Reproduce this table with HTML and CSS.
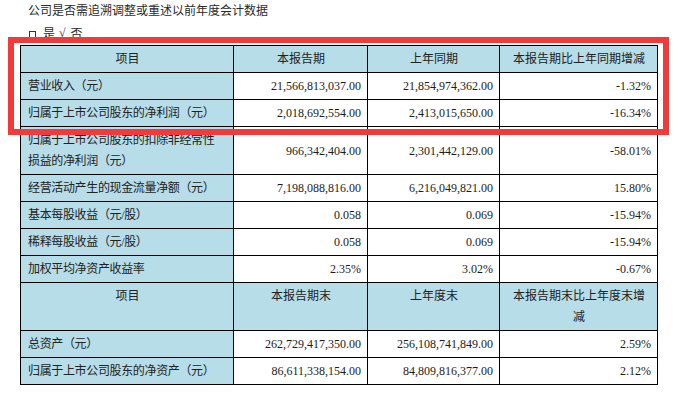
FILE: index.html
```html
<!DOCTYPE html>
<html lang="zh">
<head>
<meta charset="utf-8">
<link rel="stylesheet" href="styles.css">
</head>
<body>
<div class="page">
  <div class="intro">
    <p class="line">公司是否需追溯调整或重述以前年度会计数据</p>
    <p class="line opts"><span class="box"></span><span class="opt">是</span><span class="check">√</span><span class="opt">否</span></p>
  </div>
  <table class="data">
    <colgroup>
      <col class="c1"><col class="c2"><col class="c3"><col class="c4">
    </colgroup>
    <tr class="head">
      <td>项目</td><td>本报告期</td><td>上年同期</td><td>本报告期比上年同期增减</td>
    </tr>
    <tr>
      <td class="label">营业收入（元）</td><td class="num">21,566,813,037.00</td><td class="num">21,854,974,362.00</td><td class="num">-1.32%</td>
    </tr>
    <tr>
      <td class="label">归属于上市公司股东的净利润（元）</td><td class="num">2,018,692,554.00</td><td class="num">2,413,015,650.00</td><td class="num">-16.34%</td>
    </tr>
    <tr>
      <td class="label">归属于上市公司股东的扣除非经常性<br>损益的净利润（元）</td><td class="num">966,342,404.00</td><td class="num">2,301,442,129.00</td><td class="num">-58.01%</td>
    </tr>
    <tr>
      <td class="label">经营活动产生的现金流量净额（元）</td><td class="num">7,198,088,816.00</td><td class="num">6,216,049,821.00</td><td class="num">15.80%</td>
    </tr>
    <tr>
      <td class="label">基本每股收益（元/股）</td><td class="num">0.058</td><td class="num">0.069</td><td class="num">-15.94%</td>
    </tr>
    <tr>
      <td class="label">稀释每股收益（元/股）</td><td class="num">0.058</td><td class="num">0.069</td><td class="num">-15.94%</td>
    </tr>
    <tr>
      <td class="label">加权平均净资产收益率</td><td class="num">2.35%</td><td class="num">3.02%</td><td class="num">-0.67%</td>
    </tr>
    <tr class="head top">
      <td>项目</td><td>本报告期末</td><td>上年度末</td><td>本报告期末比上年度末增<br>减</td>
    </tr>
    <tr>
      <td class="label">总资产（元）</td><td class="num">262,729,417,350.00</td><td class="num">256,108,741,849.00</td><td class="num">2.59%</td>
    </tr>
    <tr>
      <td class="label">归属于上市公司股东的净资产（元）</td><td class="num">86,611,338,154.00</td><td class="num">84,809,816,377.00</td><td class="num">2.12%</td>
    </tr>
  </table>
  <div class="highlight"></div>
</div>
</body>
</html>
```

FILE: styles.css
```css
html, body {
  margin: 0;
  padding: 0;
  background: #ffffff;
}
body {
  font-family: "Liberation Serif", "Noto Sans CJK SC", serif;
  font-size: 12px;
  color: #1c1c1c;
}
.page {
  position: relative;
  width: 679px;
  height: 407px;
}
.intro {
  padding-left: 28px;
}
.line {
  margin: 0;
  line-height: 22px;
  height: 22px;
  color: #2a2a2a;
}
.opts {
  display: flex;
  align-items: center;
  padding-left: 1px;
}
.box {
  display: inline-block;
  width: 5px;
  height: 5px;
  border: 1px solid #333;
  margin: 3px 7px 0 0;
}
.opt {
  font-family: "Noto Sans CJK SC", sans-serif;
}
.check {
  font-family: "Liberation Serif", serif;
  margin: 0 5px 0 4px;
}
.data {
  margin: 1px 0 0 20px;
  width: 638px;
  table-layout: fixed;
  border-collapse: collapse;
}
.c1 { width: 213px; }
.c2 { width: 134px; }
.c3 { width: 132px; }
.c4 { width: 158px; }
.data td {
  border: 1px solid #000;
  padding: 3px 6px 2px 7px;
  line-height: 21px;
  vertical-align: middle;
  background: #ffffff;
  white-space: nowrap;
}
.data .head td {
  background: #b7dde8;
  text-align: center;
  vertical-align: top;
  color: #222;
}
.data td.label {
  background: #b7dde8;
  text-align: left;
  letter-spacing: -0.35px;
  color: #222;
}
.data td.num {
  text-align: right;
}
.highlight {
  position: absolute;
  left: 8px;
  top: 37px;
  width: 661px;
  height: 98px;
  box-sizing: border-box;
  border: 6px solid #f23a3a;
  pointer-events: none;
}
```
